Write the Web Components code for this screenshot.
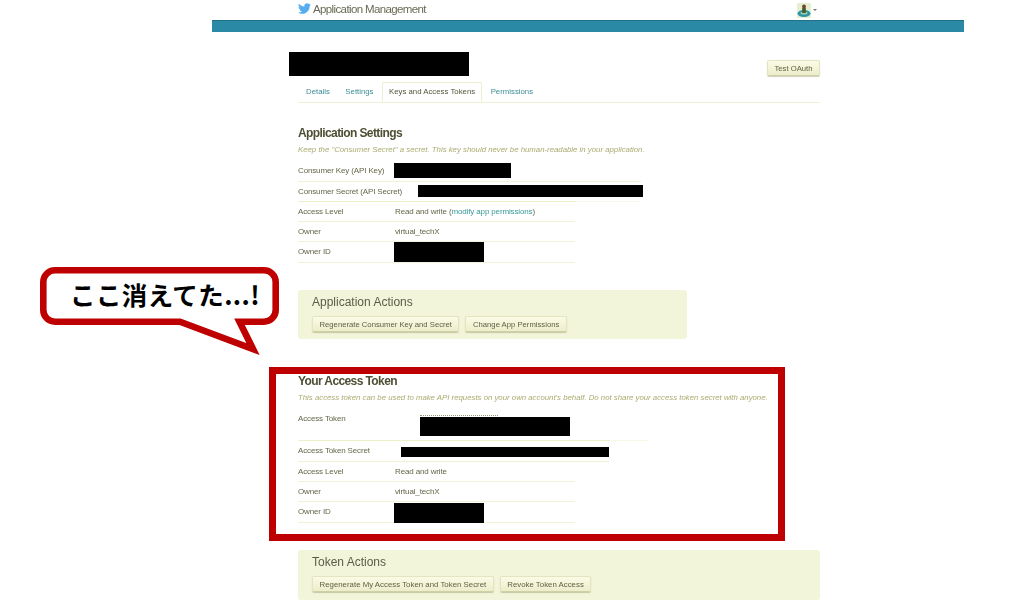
<!DOCTYPE html>
<html lang="en">
<head>
<meta charset="utf-8">
<title>Application Management</title>
<style>
  html, body { margin: 0; background: #fff; }
  body {
    position: relative;
    width: 1024px;
    height: 605px;
    overflow: hidden;
    font-family: "Liberation Sans", Arial, sans-serif;
    color: #66664a;
  }
  .sheet { filter: blur(0.4px); }
  .column { margin-left: 298px; width: 522px; }
  .title-row { display: flex; justify-content: flex-end; margin-top: 28px; }
</style>
</head>
<body>
<div class="sheet">
  <app-header></app-header>
  <div class="column">
    <div class="title-row"><soft-button>Test OAuth</soft-button></div>
    <app-tabs></app-tabs>

    <info-section style="margin-top:23px" heading="Application Settings" note="Keep the &quot;Consumer Secret&quot; a secret. This key should never be human-readable in your application.">
      <detail-row label="Consumer Key (API Key)" line="343" height="21"></detail-row>
      <detail-row label="Consumer Secret (API Secret)" line="343" style="border-image:linear-gradient(to right,#eef0c8 277px,#f6f7e6 277px) 1"></detail-row>
      <detail-row label="Access Level">Read and write (<a>modify app permissions</a>)</detail-row>
      <detail-row label="Owner">virtual_techX</detail-row>
      <detail-row label="Owner ID" height="21" style="padding-bottom:2px"></detail-row>
    </info-section>

    <action-panel style="margin-top:27px;width:389px" heading="Application Actions">
      <soft-button>Regenerate Consumer Key and Secret</soft-button>
      <soft-button>Change App Permissions</soft-button>
    </action-panel>

    <info-section style="margin-top:35px" heading="Your Access Token" note="This access token can be used to make API requests on your own account's behalf. Do not share your access token secret with anyone.">
      <detail-row label="Access Token" line="350" height="32" top style="border-image:linear-gradient(to right,#eef0c8 311px,#f6f7e6 311px) 1"></detail-row>
      <detail-row label="Access Token Secret" line="311" height="21"></detail-row>
      <detail-row label="Access Level">Read and write</detail-row>
      <detail-row label="Owner">virtual_techX</detail-row>
      <detail-row label="Owner ID" height="21" style="padding-bottom:2px"></detail-row>
    </info-section>

    <action-panel style="margin-top:27px;height:50px" heading="Token Actions">
      <soft-button style="font-size:7.85px">Regenerate My Access Token and Token Secret</soft-button>
      <soft-button style="font-size:7.85px">Revoke Token Access</soft-button>
    </action-panel>
  </div>
</div>

<!-- redaction bars and annotations painted on top of the screenshot -->
<redact-bar style="left:289px;top:52px;width:180px;height:24px"></redact-bar>
<redact-bar style="left:394px;top:163px;width:117px;height:15px"></redact-bar>
<redact-bar style="left:418px;top:185px;width:225px;height:12px"></redact-bar>
<redact-bar style="left:394px;top:242px;width:90px;height:20px"></redact-bar>
<redact-bar style="left:420px;top:417px;width:150px;height:19px" peek></redact-bar>
<redact-bar style="left:401px;top:447px;width:208px;height:10px"></redact-bar>
<redact-bar style="left:394px;top:503px;width:90px;height:20px"></redact-bar>
<red-frame></red-frame>
<speech-callout>ここ消えてた...!</speech-callout>

<script>
class AppHeader extends HTMLElement {
  constructor() {
    super();
    this.attachShadow({ mode: "open" });
    this.shadowRoot.innerHTML = `
      <style>
        :host { display: block; margin-left: 212px; width: 752px; }
        .top {
          display: flex;
          align-items: center;
          box-sizing: border-box;
          height: 20px;
          padding: 0 0 3px 86px;
          font-size: 11.5px;
          letter-spacing: -0.62px;
          color: #6a6a55;
        }
        .bird { width: 13px; height: 13px; margin-right: 2px; fill: #55acee; }
        .name { flex: 1; }
        .user { display: flex; align-items: center; margin: 3px 147px 0 0; }
        .avatar { width: 14px; height: 15px; }
        .caret {
          width: 0; height: 0; margin-left: 2px;
          border: 2.5px solid transparent;
          border-top-color: #777;
          border-bottom: 0;
        }
        .bar {
          height: 12px;
          background: #2a8aa5;
          box-shadow: inset 0 1px 0 #1f7088;
        }
      </style>
      <div class="top">
        <svg class="bird" viewBox="0 0 24 24"><path d="M23.953 4.57a10 10 0 01-2.825.775 4.958 4.958 0 002.163-2.723c-.951.555-2.005.959-3.127 1.184a4.92 4.92 0 00-8.384 4.482C7.69 8.095 4.067 6.13 1.64 3.162a4.822 4.822 0 00-.666 2.475c0 1.71.87 3.213 2.188 4.096a4.904 4.904 0 01-2.228-.616v.06a4.923 4.923 0 003.946 4.827 4.996 4.996 0 01-2.212.085 4.936 4.936 0 004.604 3.417 9.867 9.867 0 01-6.102 2.105c-.39 0-.779-.023-1.17-.067a13.995 13.995 0 007.557 2.209c9.053 0 13.998-7.496 13.998-13.985 0-.21 0-.42-.015-.63A9.935 9.935 0 0024 4.59z"/></svg>
        <span class="name">Application Management</span>
        <div class="user">
          <svg class="avatar" viewBox="0 0 14 15">
            <rect width="14" height="15" fill="#e6efd0"/>
            <ellipse cx="7" cy="10.5" rx="6.5" ry="3.5" fill="#2f93a8"/>
            <ellipse cx="7" cy="10" rx="3.5" ry="1.6" fill="#9ccfa8"/>
            <circle cx="7" cy="3.5" r="2" fill="#6b4a2a"/>
            <rect x="5.2" y="5" width="3.6" height="5" fill="#4a5a2a"/>
          </svg>
          <span class="caret"></span>
        </div>
      </div>
      <div class="bar"></div>
    `;
  }
}

class SoftButton extends HTMLElement {
  constructor() {
    super();
    this.attachShadow({ mode: "open" });
    this.shadowRoot.innerHTML = `
      <style>
        :host {
          display: inline-flex;
          align-items: center;
          height: 14px;
          padding: 0 6.5px;
          font-size: 7.7px;
          white-space: nowrap;
          color: #5f5f45;
          background: linear-gradient(#fbfbe6, #ecedcb);
          border: 1px solid #e3e4c0;
          border-bottom-color: #cfd0a4;
          border-radius: 2px;
          box-shadow: 0 1px 1px rgba(120, 120, 70, 0.35);
        }
      </style>
      <slot></slot>
    `;
  }
}

class AppTabs extends HTMLElement {
  constructor() {
    super();
    this.attachShadow({ mode: "open" });
    this.shadowRoot.innerHTML = `
      <style>
        :host {
          display: flex;
          height: 20px;
          margin-top: 6px;
          padding-left: 8px;
          gap: 15.5px;
          border-bottom: 1px solid #f0f0d8;
          font-size: 7.8px;
          color: #3f8d96;
        }
        span { padding-top: 5px; line-height: 10px; }
        .on {
          color: #55553a;
          background: #fff;
          height: 15px;
          margin: 0 -7px 0 -7px;
          padding: 4px 6px 0;
          border: 1px solid #eeeed0;
          border-bottom: 0;
          border-radius: 2px 2px 0 0;
        }
      </style>
      <span>Details</span>
      <span>Settings</span>
      <span class="on">Keys and Access Tokens</span>
      <span>Permissions</span>
    `;
  }
}

class InfoSection extends HTMLElement {
  constructor() {
    super();
    this.attachShadow({ mode: "open" });
    this.shadowRoot.innerHTML = `
      <style>
        :host { display: block; }
        h2 {
          margin: 0;
          font-size: 12px;
          letter-spacing: -0.6px;
          line-height: 14px;
          color: #4f4f35;
        }
        p {
          margin: 5px 0 6px;
          font-size: 7.8px;
          line-height: 10px;
          font-style: italic;
          white-space: nowrap;
          color: #a9ac70;
        }
      </style>
      <h2></h2>
      <p></p>
      <slot></slot>
    `;
    this.shadowRoot.querySelector("h2").textContent = this.getAttribute("heading");
    this.shadowRoot.querySelector("p").textContent = this.getAttribute("note");
  }
}

class DetailRow extends HTMLElement {
  constructor() {
    super();
    this.attachShadow({ mode: "open" });
    this.shadowRoot.innerHTML = `
      <style>
        :host {
          display: grid;
          grid-template-columns: 97px 1fr;
          align-items: center;
          box-sizing: border-box;
          height: 20px;
          width: 277px;
          padding-bottom: 1px;
          font-size: 8px;
          letter-spacing: -0.14px;
          white-space: nowrap;
          border-bottom: 1px solid #f1f3d6;
        }
        :host([top]) { align-items: start; padding-top: 5px; }
        ::slotted(a) { color: #3a9a98; }
      </style>
      <span class="label"></span>
      <span><slot></slot></span>
    `;
    this.shadowRoot.querySelector(".label").textContent = this.getAttribute("label");
    if (this.hasAttribute("height")) this.style.height = this.getAttribute("height") + "px";
    if (this.hasAttribute("line")) this.style.width = this.getAttribute("line") + "px";
  }
}

class ActionPanel extends HTMLElement {
  constructor() {
    super();
    this.attachShadow({ mode: "open" });
    this.shadowRoot.innerHTML = `
      <style>
        :host {
          display: block;
          box-sizing: border-box;
          height: 49px;
          padding: 5px 14px 0;
          background: #f2f5d9;
          border-radius: 3px;
        }
        h3 {
          margin: 0 0 7px;
          font-size: 12px;
          line-height: 14px;
          font-weight: normal;
          color: #5c5c48;
        }
        .buttons { display: flex; gap: 6px; }
      </style>
      <h3></h3>
      <div class="buttons"><slot></slot></div>
    `;
    this.shadowRoot.querySelector("h3").textContent = this.getAttribute("heading");
  }
}

class RedactBar extends HTMLElement {
  constructor() {
    super();
    this.attachShadow({ mode: "open" });
    this.shadowRoot.innerHTML = `
      <style>
        :host { display: block; position: absolute; background: #000; }
        /* the top of the token text still shows above the bar */
        :host([peek])::before {
          content: "";
          position: absolute;
          left: 0; top: -2px;
          width: 78px;
          border-top: 1px dotted #99997a;
        }
      </style>
    `;
  }
}

class RedFrame extends HTMLElement {
  constructor() {
    super();
    this.attachShadow({ mode: "open" });
    this.shadowRoot.innerHTML = `
      <style>
        :host {
          display: block;
          position: absolute;
          left: 269px; top: 367px;
          width: 516px; height: 174px;
          box-sizing: border-box;
          border: 7px solid #bf0000;
        }
      </style>
    `;
  }
}

class SpeechCallout extends HTMLElement {
  constructor() {
    super();
    this.attachShadow({ mode: "open" });
    this.shadowRoot.innerHTML = `
      <style>
        :host {
          display: block;
          position: absolute;
          left: 40px; top: 267px;
          width: 222px; height: 90px;
        }
        svg { position: absolute; left: 0; top: 0; overflow: visible; }
        .text {
          position: absolute;
          left: 30px; top: 8px;
          font: 700 25.5px/38px "Noto Sans CJK JP", sans-serif;
          letter-spacing: 0.4px;
          white-space: nowrap;
          color: #000;
        }
      </style>
      <svg width="240" height="90" viewBox="0 0 240 90">
        <path d="M15 3.3H224a11.7 11.7 0 0 1 11.7 11.7V43a11.7 11.7 0 0 1-11.7 11.7H199.500L213 82 140 54.700H15A11.700 11.700 0 0 1 3.300 43V15A11.700 11.700 0 0 1 15 3.300Z"
          fill="#fff" stroke="#bf0000" stroke-width="6.600" stroke-miterlimit="10"/>
      </svg>
      <span class="text"><slot></slot></span>
    `;
  }
}

customElements.define("app-header", AppHeader);
customElements.define("soft-button", SoftButton);
customElements.define("app-tabs", AppTabs);
customElements.define("info-section", InfoSection);
customElements.define("detail-row", DetailRow);
customElements.define("action-panel", ActionPanel);
customElements.define("redact-bar", RedactBar);
customElements.define("red-frame", RedFrame);
customElements.define("speech-callout", SpeechCallout);
</script>
</body>
</html>
